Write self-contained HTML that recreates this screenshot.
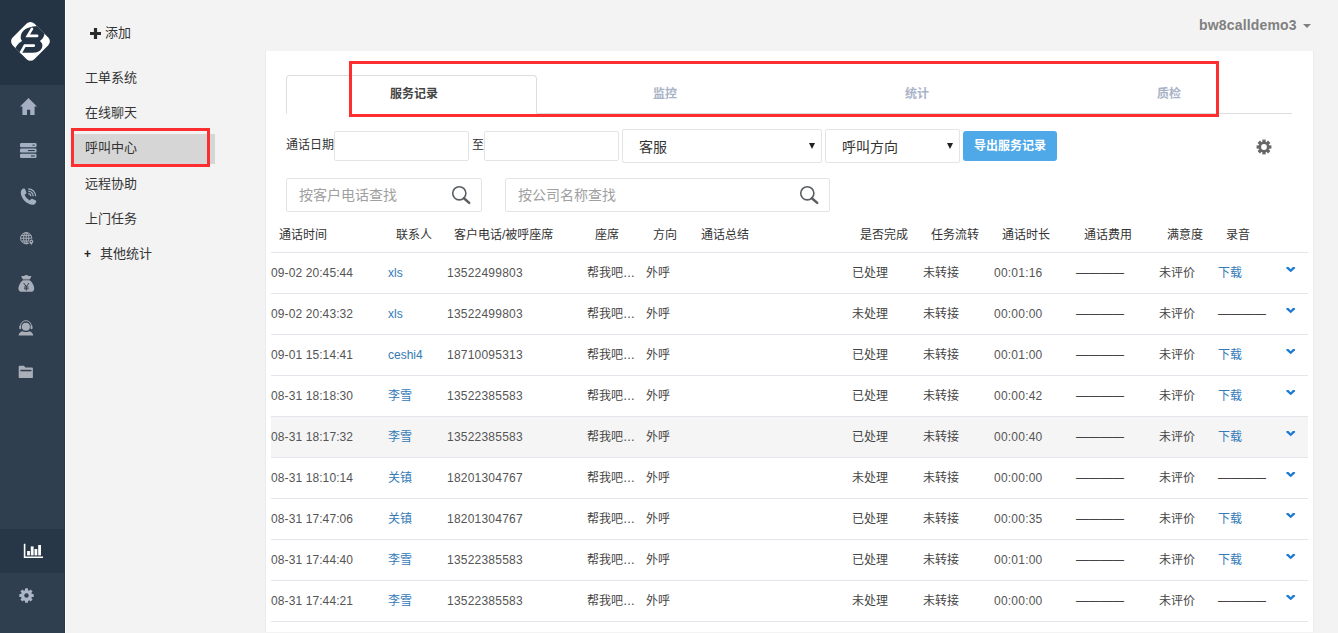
<!DOCTYPE html>
<html lang="zh-CN">
<head>
<meta charset="utf-8">
<title>呼叫中心 - 服务记录</title>
<style>
*{box-sizing:border-box;margin:0;padding:0}
html,body{width:1338px;height:633px;overflow:hidden}
body{background:#f3f3f3;font-family:"Liberation Sans","Noto Sans CJK SC",sans-serif;font-size:12px;color:#333;position:relative}
.abs{position:absolute}
/* left dark sidebar */
#side{position:absolute;left:0;top:0;width:65px;height:633px;background:#2f3f50}
#side:after{content:"";position:absolute;left:64px;top:0;width:1px;height:633px;background:#293949}
#sideline{position:absolute;left:65px;top:0;width:1px;height:633px;background:#fcfcfc}
#logo{position:absolute;left:0;top:0;width:65px;height:85px;background:#243444}
.ico{position:absolute;left:0;width:65px;height:44px}
.ico svg{position:absolute;display:block}
#act{position:absolute;left:0;top:529px;width:65px;height:44px;background:#283747}
/* second nav */
#nav{position:absolute;left:65px;top:0;width:201px;height:633px}
#nav .it{position:absolute;left:20px;height:30px;line-height:30px;font-size:13px;color:#333;white-space:nowrap}
#nav .sel{position:absolute;left:8px;top:134px;width:142px;height:30px;background:#d6d6d6}
#redA{position:absolute;left:71px;top:128px;width:139px;height:39px;border:3px solid #fc2e30}
/* main panel */
#panel{position:absolute;left:265px;top:51px;width:1049px;height:581px;background:#fff;border-left:1px solid #e9ebee;border-right:1px solid #e9ebee}
#user{position:absolute;left:1199px;top:16px;font-size:14px;font-weight:bold;color:#808080;letter-spacing:0.17px;white-space:nowrap;line-height:18px}
#caret{position:absolute;left:1303px;top:24px;width:0;height:0;border-left:4px solid transparent;border-right:4px solid transparent;border-top:4px solid #808080}
/* tabs */
#tabline{position:absolute;left:286px;top:113px;width:1006px;height:1px;background:#ddd}
#tab1{position:absolute;left:286px;top:75px;width:251px;height:39px;border:1px solid #ddd;border-bottom:1px solid #fff;border-radius:4px 4px 0 0;background:#fff}
.tab{position:absolute;top:84px;height:20px;line-height:20px;font-size:12px;font-weight:bold;white-space:nowrap;color:#a9b3c8;transform:translateX(-50%)}
#redB{position:absolute;left:349px;top:61px;width:870px;height:56px;border:3px solid #fc2e30}
/* filter row */
.lbl{position:absolute;font-size:12px;line-height:16px;color:#333;white-space:nowrap}
.inp{position:absolute;border:1px solid #e2e4e7;background:#fff;border-radius:2px}
.seltxt{position:absolute;font-size:14px;line-height:20px;color:#333;white-space:nowrap}
.arr{position:absolute;width:0;height:0;border-left:3.1px solid transparent;border-right:3.1px solid transparent;border-top:6.2px solid #222}
#btn{position:absolute;left:963px;top:131px;width:94px;height:30px;border-radius:3px;background:#4fa8e8;color:#fff;font-size:12px;font-weight:bold;line-height:30px;text-align:center;white-space:nowrap}
.ph{position:absolute;font-size:14px;line-height:20px;color:#a0a0a0;white-space:nowrap}
/* table */
.th{position:absolute;top:227px;font-size:12px;line-height:16px;color:#333;white-space:nowrap}
.row{position:absolute;left:271px;width:1037px;height:41px;border-top:1px solid #e3e7eb}
.row span{position:absolute;top:12px;line-height:16px;font-size:12px;color:#444;white-space:nowrap}
.row span.lk{color:#337ab7}
.row span.n{letter-spacing:0.22px;color:#555}
.row svg{position:absolute;left:1014.8px;top:14px}
.row.hov{background:#f5f5f5}
</style>
</head>
<body>
<div id="side">
  <div id="logo"></div>
  <div id="act"></div>
  <svg class="abs" style="left:5px;top:15px" width="55" height="55" viewBox="0 0 633 633">
    <defs><clipPath id="dm"><rect x="-176" y="-176" width="352" height="352" rx="62" transform="translate(293,303) rotate(45)"/></clipPath></defs>
    <g clip-path="url(#dm)">
      <rect x="0" y="0" width="633" height="633" fill="#fff"/>
      <path d="M420 120 C 330 128, 235 140, 200 195 C 172 235, 178 280, 198 300 C 165 315, 135 345, 110 400 L 150 436 C 240 428, 340 448, 385 420 C 440 388, 445 330, 402 298 C 440 275, 465 230, 450 170 Z" fill="#243444"/>
      <path d="M310 160 L262 240 L370 240" fill="none" stroke="#fff" stroke-width="30" stroke-linecap="round"/>
      <path d="M332 352 L228 352 L170 455" fill="none" stroke="#fff" stroke-width="30" stroke-linecap="round"/>
    </g>
  </svg>
  <!-- home -->
  <svg class="abs" style="left:20px;top:98.4px" width="17" height="17" viewBox="0 0 17 17"><path d="M8.5 0 L17 8.6 H14.6 V17 H10.2 V11.8 H7 V17 H2.4 V8.6 H0 Z" fill="#a4afc3"/></svg>
  <!-- server -->
  <svg class="abs" style="left:20px;top:143px" width="17" height="15" viewBox="0 0 17 15">
    <rect x="0" y="0" width="16.5" height="4.2" rx="1.2" fill="#a4afc3"/><rect x="0" y="5.4" width="16.5" height="4.2" rx="1.2" fill="#a4afc3"/><rect x="0" y="10.8" width="16.5" height="4.2" rx="1.2" fill="#a4afc3"/>
    <rect x="12.6" y="1.6" width="2" height="1.1" fill="#2f3f50"/><rect x="8" y="7" width="6.8" height="1.1" fill="#2f3f50"/><rect x="11" y="12.4" width="3.8" height="1.1" fill="#2f3f50"/>
  </svg>
  <!-- phone -->
  <svg class="abs" style="left:20px;top:188px" width="18" height="18" viewBox="0 0 18 18">
    <path d="M3.2 0.6 C4.2 0.2 5 0.6 5.3 1.5 L6.3 4.2 C6.6 5 6.3 5.6 5.6 6.1 L4.6 6.8 C5.6 9.3 7.4 11.2 9.9 12.4 L10.8 11.3 C11.3 10.7 12 10.5 12.7 10.9 L15.4 12.3 C16.2 12.7 16.5 13.5 16 14.4 C15.2 15.9 13.8 16.9 12 16.7 C6.5 16 1.2 10.5 0.8 5 C0.7 3.1 1.6 1.4 3.2 0.6 Z" fill="#a4afc3"/>
    <path d="M8.2 5.6 A2.6 2.6 0 0 1 10.8 8.2" fill="none" stroke="#a4afc3" stroke-width="1.2"/>
    <path d="M8.2 3.2 A5 5 0 0 1 13.2 8.2" fill="none" stroke="#a4afc3" stroke-width="1.2"/>
    <path d="M8.2 0.8 A7.4 7.4 0 0 1 15.6 8.2" fill="none" stroke="#a4afc3" stroke-width="1.2"/>
  </svg>
  <!-- globe -->
  <svg class="abs" style="left:20px;top:231.5px" width="15" height="14" viewBox="0 0 15 14">
    <g fill="none" stroke="#a9aeb8" stroke-width="1">
      <circle cx="6.2" cy="6.2" r="5.6"/><ellipse cx="6.2" cy="6.2" rx="2.6" ry="5.6"/><path d="M6.2 0.6 V11.8 M0.6 6.2 H11.8 M1.4 3.4 H11 M1.4 9 H11"/>
    </g>
    <path d="M11.3 7.2 a2.3 2.3 0 0 1 2.3 2.3 c0 1.4 -2.3 4 -2.3 4 s-2.3 -2.6 -2.3 -4 a2.3 2.3 0 0 1 2.3 -2.3 Z" fill="#a9aeb8" stroke="#2f3f50" stroke-width="0.8"/>
    <circle cx="11.3" cy="9.5" r="0.8" fill="#2f3f50"/>
  </svg>
  <!-- money bag -->
  <svg class="abs" style="left:18px;top:275px" width="17" height="17" viewBox="0 0 17 17">
    <path d="M3.2 1.6 C4.2 0.4 5.2 1.4 6 1 C7 0.2 7.6 0 8.4 0 C9.2 0 9.8 0.4 10.6 1 C11.6 1.4 12.4 0.4 13.4 1.6 L11.6 4.6 H5 Z" fill="#a9aeb8"/>
    <path d="M5 5.2 H11.6 C14.2 7 16.2 10.4 16.2 13.4 C16.2 15.8 14.8 16.8 12.6 16.8 H4 C1.8 16.8 0.4 15.8 0.4 13.4 C0.4 10.4 2.4 7 5 5.2 Z" fill="#a9aeb8"/>
    <path d="M5.6 8 L8.3 11.6 L11 8 M8.3 11.4 V15.6 M6 12 H10.6 M6 13.8 H10.6" fill="none" stroke="#2f3f50" stroke-width="1"/>
  </svg>
  <!-- headset -->
  <svg class="abs" style="left:18.3px;top:320px" width="16.2" height="16.2" viewBox="0 0 17 17">
    <path d="M2.6 8 V6.4 A5.7 5.7 0 0 1 14 6.4 V8" fill="none" stroke="#a9aeb8" stroke-width="1"/>
    <rect x="1.4" y="5.8" width="2" height="3.8" rx="1" fill="#a9aeb8"/><rect x="13.2" y="5.8" width="2" height="3.8" rx="1" fill="#a9aeb8"/>
    <circle cx="8.3" cy="7" r="4.2" fill="#a9aeb8"/>
    <path d="M0.6 16.4 C0.8 13.6 2.4 12.4 5 11.8 C7 13 9.6 13 11.6 11.8 C14.2 12.4 15.8 13.6 16 16.4 Z" fill="#a9aeb8"/>
  </svg>
  <!-- folder -->
  <svg class="abs" style="left:18px;top:365px" width="16" height="14" viewBox="0 0 16 14">
    <path d="M1.6 0.8 H6 L7.4 2.4 H14 A0.9 0.9 0 0 1 14.9 3.3 V12.2 A0.9 0.9 0 0 1 14 13.1 H1.6 A0.9 0.9 0 0 1 0.7 12.2 V1.7 A0.9 0.9 0 0 1 1.6 0.8 Z" fill="#a9aeb8"/>
    <rect x="2.4" y="4.8" width="11" height="1.5" fill="#2f3f50"/>
  </svg>
  <!-- chart -->
  <svg class="abs" style="left:23px;top:543px" width="21" height="16" viewBox="0 0 21 16">
    <path d="M1.6 0.8 V14.2 H20" fill="none" stroke="#fff" stroke-width="1.6"/>
    <rect x="4.1" y="8" width="2.8" height="4.4" fill="#fff"/><rect x="7.8" y="3.4" width="2.8" height="9" fill="#fff"/><rect x="11.5" y="6" width="2.8" height="6.4" fill="#fff"/><rect x="15.2" y="2" width="2.8" height="10.4" fill="#fff"/>
  </svg>
  <!-- gear -->
  <svg class="abs" style="left:19.3px;top:587.5px" width="15" height="15" viewBox="0 0 15 15"><g fill="#adb5c9"><circle cx="7.5" cy="7.5" r="5.5"/><rect x="6.00" y="0.30" width="3.0" height="14.4" rx="0.4" transform="rotate(0 7.5 7.5)"/><rect x="6.00" y="0.30" width="3.0" height="14.4" rx="0.4" transform="rotate(45 7.5 7.5)"/><rect x="6.00" y="0.30" width="3.0" height="14.4" rx="0.4" transform="rotate(90 7.5 7.5)"/><rect x="6.00" y="0.30" width="3.0" height="14.4" rx="0.4" transform="rotate(135 7.5 7.5)"/></g><circle cx="7.5" cy="7.5" r="2.2" fill="#2f3f50"/></svg>
</div>

<div id="sideline"></div>
<div id="nav">
  <div class="sel"></div>
  <svg class="abs" style="left:25px;top:27.5px" width="11" height="11" viewBox="0 0 11 11"><path d="M3.9 0 H7.1 V3.9 H11 V7.1 H7.1 V11 H3.9 V7.1 H0 V3.9 H3.9 Z" fill="#2a2a2a"/></svg>
  <div class="it" style="top:18px;left:40px">添加</div>
  <div class="it" style="top:63px">工单系统</div>
  <div class="it" style="top:98px">在线聊天</div>
  <div class="it" style="top:133px">呼叫中心</div>
  <div class="it" style="top:169px">远程协助</div>
  <div class="it" style="top:204px">上门任务</div>
  <div class="it" style="top:239px"><b style="font-size:12px;position:relative;left:-1px;top:-0.5px;display:inline-block;width:15px;color:#222">+</b>其他统计</div>
</div>
<div id="redA"></div>

<div id="user">bw8calldemo3</div>
<div id="caret"></div>

<div id="panel"></div>
<div id="tabline"></div>
<div id="tab1"></div>
<div class="tab" style="left:414px;color:#444">服务记录</div>
<div class="tab" style="left:665px">监控</div>
<div class="tab" style="left:917px">统计</div>
<div class="tab" style="left:1169px">质检</div>
<div id="redB"></div>

<div class="lbl" style="left:286px;top:137px">通话日期</div>
<div class="inp" style="left:334px;top:131px;width:135px;height:30px"></div>
<div class="lbl" style="left:472px;top:137px">至</div>
<div class="inp" style="left:484px;top:131px;width:135px;height:30px"></div>
<div class="inp" style="left:622px;top:129px;width:200px;height:34px"></div>
<div class="seltxt" style="left:639px;top:137px">客服</div>
<div class="arr" style="left:809px;top:142.8px"></div>
<div class="inp" style="left:825px;top:129px;width:135px;height:34px"></div>
<div class="seltxt" style="left:842px;top:137px">呼叫方向</div>
<div class="arr" style="left:947px;top:142.8px"></div>
<div id="btn">导出服务记录</div>

<div class="inp" style="left:286px;top:178px;width:196px;height:34px"></div>
<div class="ph" style="left:299px;top:185px">按客户电话查找</div>
<div class="inp" style="left:505px;top:178px;width:325px;height:34px"></div>
<div class="ph" style="left:518px;top:185px">按公司名称查找</div>

<svg class="abs" style="left:1255.5px;top:138.5px" width="16" height="16" viewBox="0 0 16 16"><g fill="#666"><circle cx="8.0" cy="8.0" r="5.4"/><rect x="6.35" y="0.60" width="3.3" height="14.8" transform="rotate(0 8.0 8.0)"/><rect x="6.35" y="0.60" width="3.3" height="14.8" transform="rotate(45 8.0 8.0)"/><rect x="6.35" y="0.60" width="3.3" height="14.8" transform="rotate(90 8.0 8.0)"/><rect x="6.35" y="0.60" width="3.3" height="14.8" transform="rotate(135 8.0 8.0)"/></g><circle cx="8.0" cy="8.0" r="2.9" fill="#fff"/></svg>
<svg class="abs" style="left:450px;top:184px" width="22" height="22" viewBox="0 0 22 22"><circle cx="9.3" cy="9.3" r="6.6" fill="none" stroke="#5a5f63" stroke-width="1.6"/><path d="M13.9 14.2 L19.2 18.9" stroke="#5a5f63" stroke-width="2.5" stroke-linecap="round"/></svg>
<svg class="abs" style="left:798px;top:184px" width="22" height="22" viewBox="0 0 22 22"><circle cx="9.3" cy="9.3" r="6.6" fill="none" stroke="#5a5f63" stroke-width="1.6"/><path d="M13.9 14.2 L19.2 18.9" stroke="#5a5f63" stroke-width="2.5" stroke-linecap="round"/></svg>
<div class="th" style="left:279px">通话时间</div>
<div class="th" style="left:396px">联系人</div>
<div class="th" style="left:454px">客户电话/被呼座席</div>
<div class="th" style="left:595px">座席</div>
<div class="th" style="left:653px">方向</div>
<div class="th" style="left:701px">通话总结</div>
<div class="th" style="left:860px">是否完成</div>
<div class="th" style="left:931px">任务流转</div>
<div class="th" style="left:1002px">通话时长</div>
<div class="th" style="left:1084px">通话费用</div>
<div class="th" style="left:1167px">满意度</div>
<div class="th" style="left:1226px">录音</div>

<div id="rows">
<div class="row" style="top:252px"><span class="n" style="left:0;letter-spacing:0.1px">09-02 20:45:44</span><span class="lk" style="left:117px">xls</span><span class="n" style="left:176px">13522499803</span><span style="left:316px">帮我吧…</span><span style="left:375px">外呼</span><span style="left:581px">已处理</span><span style="left:652px">未转接</span><span class="n" style="left:723px">00:01:16</span><span style="left:805px">————</span><span style="left:888px">未评价</span><span class="lk" style="left:947px">下载</span><svg width="10" height="7" viewBox="0 0 10 7"><path d="M0 0.9 L0.8 0.1 L2.5 0.1 L4.7 2.3 L6.9 0.1 L8.6 0.1 L9.4 0.9 L4.7 5.3 Z" fill="#1d7ad2"/></svg></div>
<div class="row" style="top:293px"><span class="n" style="left:0;letter-spacing:0.1px">09-02 20:43:32</span><span class="lk" style="left:117px">xls</span><span class="n" style="left:176px">13522499803</span><span style="left:316px">帮我吧…</span><span style="left:375px">外呼</span><span style="left:581px">未处理</span><span style="left:652px">未转接</span><span class="n" style="left:723px">00:00:00</span><span style="left:805px">————</span><span style="left:888px">未评价</span><span style="left:947px">————</span><svg width="10" height="7" viewBox="0 0 10 7"><path d="M0 0.9 L0.8 0.1 L2.5 0.1 L4.7 2.3 L6.9 0.1 L8.6 0.1 L9.4 0.9 L4.7 5.3 Z" fill="#1d7ad2"/></svg></div>
<div class="row" style="top:334px"><span class="n" style="left:0;letter-spacing:0.1px">09-01 15:14:41</span><span class="lk" style="left:117px">ceshi4</span><span class="n" style="left:176px">18710095313</span><span style="left:316px">帮我吧…</span><span style="left:375px">外呼</span><span style="left:581px">已处理</span><span style="left:652px">未转接</span><span class="n" style="left:723px">00:01:00</span><span style="left:805px">————</span><span style="left:888px">未评价</span><span class="lk" style="left:947px">下载</span><svg width="10" height="7" viewBox="0 0 10 7"><path d="M0 0.9 L0.8 0.1 L2.5 0.1 L4.7 2.3 L6.9 0.1 L8.6 0.1 L9.4 0.9 L4.7 5.3 Z" fill="#1d7ad2"/></svg></div>
<div class="row" style="top:375px"><span class="n" style="left:0;letter-spacing:0.1px">08-31 18:18:30</span><span class="lk" style="left:117px">李雪</span><span class="n" style="left:176px">13522385583</span><span style="left:316px">帮我吧…</span><span style="left:375px">外呼</span><span style="left:581px">已处理</span><span style="left:652px">未转接</span><span class="n" style="left:723px">00:00:42</span><span style="left:805px">————</span><span style="left:888px">未评价</span><span class="lk" style="left:947px">下载</span><svg width="10" height="7" viewBox="0 0 10 7"><path d="M0 0.9 L0.8 0.1 L2.5 0.1 L4.7 2.3 L6.9 0.1 L8.6 0.1 L9.4 0.9 L4.7 5.3 Z" fill="#1d7ad2"/></svg></div>
<div class="row hov" style="top:416px"><span class="n" style="left:0;letter-spacing:0.1px">08-31 18:17:32</span><span class="lk" style="left:117px">李雪</span><span class="n" style="left:176px">13522385583</span><span style="left:316px">帮我吧…</span><span style="left:375px">外呼</span><span style="left:581px">已处理</span><span style="left:652px">未转接</span><span class="n" style="left:723px">00:00:40</span><span style="left:805px">————</span><span style="left:888px">未评价</span><span class="lk" style="left:947px">下载</span><svg width="10" height="7" viewBox="0 0 10 7"><path d="M0 0.9 L0.8 0.1 L2.5 0.1 L4.7 2.3 L6.9 0.1 L8.6 0.1 L9.4 0.9 L4.7 5.3 Z" fill="#1d7ad2"/></svg></div>
<div class="row" style="top:457px"><span class="n" style="left:0;letter-spacing:0.1px">08-31 18:10:14</span><span class="lk" style="left:117px">关镇</span><span class="n" style="left:176px">18201304767</span><span style="left:316px">帮我吧…</span><span style="left:375px">外呼</span><span style="left:581px">未处理</span><span style="left:652px">未转接</span><span class="n" style="left:723px">00:00:00</span><span style="left:805px">————</span><span style="left:888px">未评价</span><span style="left:947px">————</span><svg width="10" height="7" viewBox="0 0 10 7"><path d="M0 0.9 L0.8 0.1 L2.5 0.1 L4.7 2.3 L6.9 0.1 L8.6 0.1 L9.4 0.9 L4.7 5.3 Z" fill="#1d7ad2"/></svg></div>
<div class="row" style="top:498px"><span class="n" style="left:0;letter-spacing:0.1px">08-31 17:47:06</span><span class="lk" style="left:117px">关镇</span><span class="n" style="left:176px">18201304767</span><span style="left:316px">帮我吧…</span><span style="left:375px">外呼</span><span style="left:581px">已处理</span><span style="left:652px">未转接</span><span class="n" style="left:723px">00:00:35</span><span style="left:805px">————</span><span style="left:888px">未评价</span><span class="lk" style="left:947px">下载</span><svg width="10" height="7" viewBox="0 0 10 7"><path d="M0 0.9 L0.8 0.1 L2.5 0.1 L4.7 2.3 L6.9 0.1 L8.6 0.1 L9.4 0.9 L4.7 5.3 Z" fill="#1d7ad2"/></svg></div>
<div class="row" style="top:539px"><span class="n" style="left:0;letter-spacing:0.1px">08-31 17:44:40</span><span class="lk" style="left:117px">李雪</span><span class="n" style="left:176px">13522385583</span><span style="left:316px">帮我吧…</span><span style="left:375px">外呼</span><span style="left:581px">已处理</span><span style="left:652px">未转接</span><span class="n" style="left:723px">00:01:00</span><span style="left:805px">————</span><span style="left:888px">未评价</span><span class="lk" style="left:947px">下载</span><svg width="10" height="7" viewBox="0 0 10 7"><path d="M0 0.9 L0.8 0.1 L2.5 0.1 L4.7 2.3 L6.9 0.1 L8.6 0.1 L9.4 0.9 L4.7 5.3 Z" fill="#1d7ad2"/></svg></div>
<div class="row" style="top:580px"><span class="n" style="left:0;letter-spacing:0.1px">08-31 17:44:21</span><span class="lk" style="left:117px">李雪</span><span class="n" style="left:176px">13522385583</span><span style="left:316px">帮我吧…</span><span style="left:375px">外呼</span><span style="left:581px">未处理</span><span style="left:652px">未转接</span><span class="n" style="left:723px">00:00:00</span><span style="left:805px">————</span><span style="left:888px">未评价</span><span style="left:947px">————</span><svg width="10" height="7" viewBox="0 0 10 7"><path d="M0 0.9 L0.8 0.1 L2.5 0.1 L4.7 2.3 L6.9 0.1 L8.6 0.1 L9.4 0.9 L4.7 5.3 Z" fill="#1d7ad2"/></svg></div>
<div class="row" style="top:621px"></div>
</div>
</body>
</html>
